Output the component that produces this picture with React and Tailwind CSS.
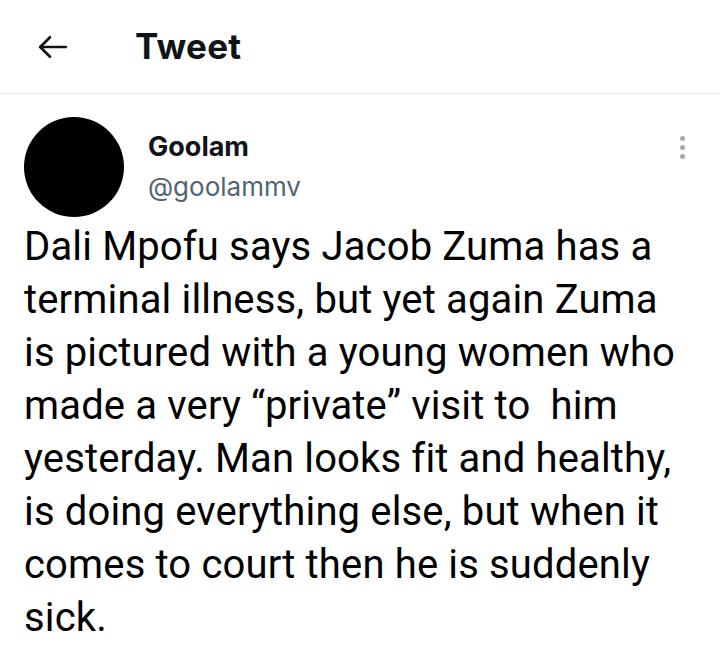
import React from 'react';

const lines = [
  'Dali Mpofu says Jacob Zuma has a',
  'terminal illness, but yet again Zuma',
  'is pictured with a young women who',
  'made a very \u201cprivate\u201d visit to\u00a0 him',
  'yesterday. Man looks fit and healthy,',
  'is doing everything else, but when it',
  'comes to court then he is suddenly',
  'sick.',
];

const App = () => {
  return (
    <div className="w-[720px] h-[662px] bg-white overflow-hidden text-[#0f1419]">
      <div className="h-[94px] flex items-center border-b border-[#e6e8ea]">
        <div className="w-[135px] pl-[35px] flex items-center">
          <svg width="36" height="36" viewBox="0 0 24 24" fill="none" stroke="#0f1419" strokeWidth="1.8" strokeLinecap="round" strokeLinejoin="round">
            <path d="M20.5 12H3.5" />
            <path d="M10 5.5L3.5 12l6.5 6.5" />
          </svg>
        </div>
        <h1 className="text-[35px] font-bold leading-none tracking-[0.3px]" style={{ fontFamily: 'Inter, "Noto Sans", sans-serif' }}>
          Tweet
        </h1>
      </div>

      <div className="px-[24px] pt-[23px]">
        <div className="flex items-start">
          <div className="w-[100px] h-[100px] rounded-full bg-black shrink-0" />
          <div className="ml-[24px] pt-[15px] flex-1" style={{ fontFamily: 'Inter, "Noto Sans", sans-serif' }}>
            <div className="text-[27px] font-bold leading-[30px]">Goolam</div>
            <div className="text-[26px] text-[#536471] leading-[30px] mt-[10px]">@goolammv</div>
          </div>
          <div className="pt-[19px] pr-[11px] flex flex-col gap-[4px]">
            <span className="w-[5px] h-[5px] rounded-full bg-[#a3a9ae]" />
            <span className="w-[5px] h-[5px] rounded-full bg-[#a3a9ae]" />
            <span className="w-[5px] h-[5px] rounded-full bg-[#a3a9ae]" />
          </div>
        </div>

        <p
          className="mt-[3px] text-[40px] leading-[53px] tracking-[0.15px] text-black whitespace-nowrap"
          style={{ fontFamily: 'Roboto, "Liberation Sans", sans-serif' }}
        >
          {lines.map((line, i) => (
            <React.Fragment key={i}>
              {line}
              {i < lines.length - 1 && <br />}
            </React.Fragment>
          ))}
        </p>
      </div>
    </div>
  );
};

export default App;
